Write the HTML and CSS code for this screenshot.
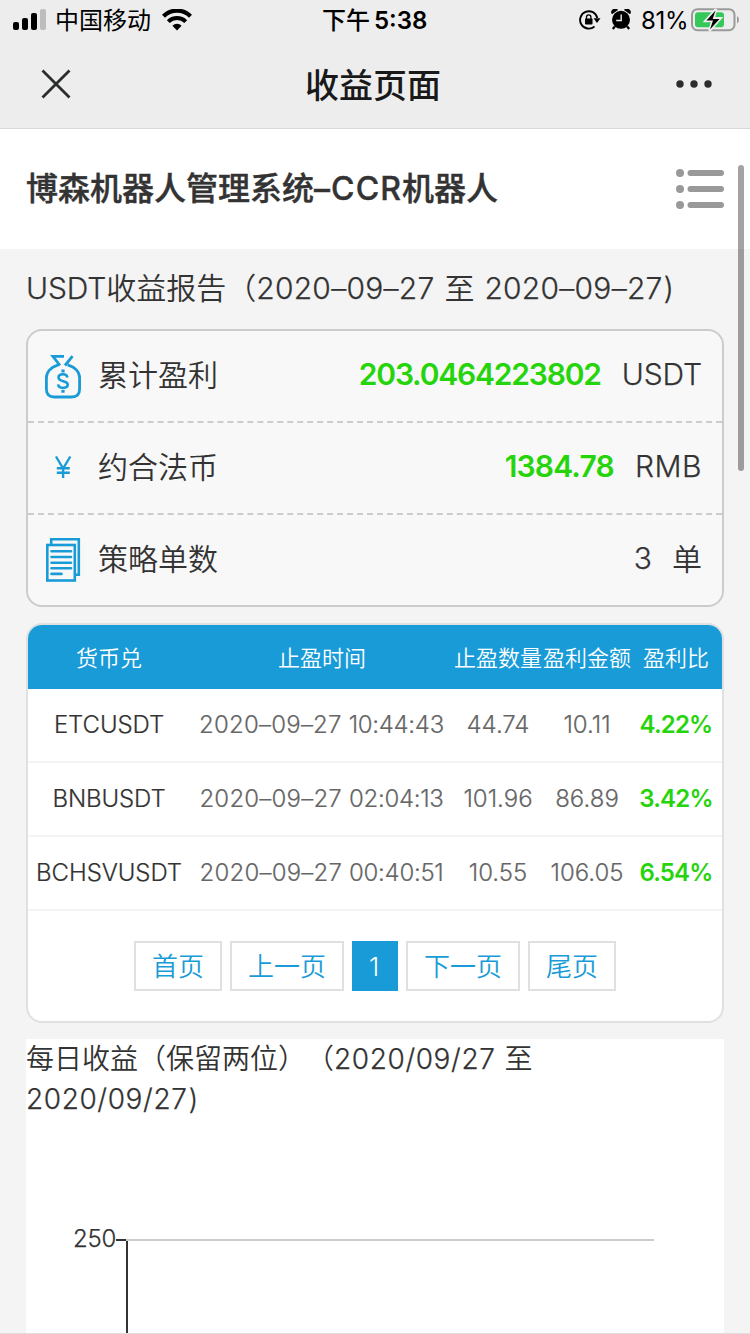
FILE: index.html
```html
<!DOCTYPE html>
<html lang="zh-CN">
<head>
<meta charset="utf-8">
<title>收益页面</title>
<link rel="stylesheet" href="styles.css">
</head>
<body>
<div class="screen">
  <header class="top">
    <div class="status">
      <div class="status-left">
        <svg class="signal" width="34" height="22" viewBox="0 0 34 22">
          <rect x="0" y="13" width="6" height="8" rx="2"/><rect x="9" y="9" width="6" height="12" rx="2"/><rect x="18" y="4" width="6" height="17" rx="2"/><rect x="27" y="0" width="6" height="21" rx="2" fill="#bdbdbd"/>
        </svg>
        <span class="carrier">中国移动</span>
        <svg class="wifi" width="30" height="22" viewBox="0 0 30 22">
          <path d="M1.500 7.200a19.200 19.200 0 0 1 27 0" fill="none" stroke="#000" stroke-width="4.200"/>
          <path d="M6.300 12.600a12.300 12.300 0 0 1 17.400 0" fill="none" stroke="#000" stroke-width="4"/>
          <path d="M15 21.400l-4.600-4.700a6.500 6.500 0 0 1 9.200 0z"/>
        </svg>
      </div>
      <div class="clock">下午<span class="clock-num">5:38</span></div>
      <div class="status-right">
        <svg width="22" height="20" viewBox="0 0 22 20">
          <path d="M15.500 16.500A8.700 8.700 0 1 1 18.300 8" fill="none" stroke="#000" stroke-width="1.900"/>
          <path d="M14.500 8.200h7l-3.500 4.800z"/>
          <rect x="6" y="8.500" width="7.500" height="6" rx=".8"/>
          <path d="M7.500 9V7a2.200 2.200 0 0 1 4.400 0v2" fill="none" stroke="#000" stroke-width="1.300"/>
        </svg>
        <svg class="alarm" width="20" height="21" viewBox="0 0 20 21">
          <circle cx="10" cy="10.800" r="9"/>
          <path d="M1 5.300A3.600 3.600 0 0 1 7 1z M19 5.300A3.600 3.600 0 0 0 13 1z"/>
          <path d="M3.800 17.500l-2 2.500M16.200 17.500l2 2.500" stroke="#000" stroke-width="2.200"/>
          <path d="M10.200 5.500v6H5.200" fill="none" stroke="#eee" stroke-width="1.400"/>
        </svg>
        <span class="percent">81%</span>
        <svg class="battery" width="49" height="24" viewBox="0 0 49 24">
          <rect x="1" y="1.200" width="42.500" height="21" rx="5.500" fill="none" stroke="#9a9a9a" stroke-width="2"/>
          <path d="M46 8v7.500q2-.8 2-3.700T46 8z" fill="#9a9a9a"/>
          <rect x="4" y="4.200" width="29" height="15" rx="3" fill="#34c759"/>
          <path d="M25 1L14.500 13h6.800L18.500 23 29.500 10.300h-7z" stroke="#eee" stroke-width="2.600"/>
          <path d="M24.500 2.500L15.500 12.500h6.500L19 21.500 28.500 11h-6.800z"/>
        </svg>
      </div>
    </div>
    <div class="nav">
      <svg class="close" width="30" height="30" viewBox="0 0 30 30"><path d="M1.500 1.500l27 27M28.500 1.500l-27 27" stroke="#2b2d2d" stroke-width="2.800"/></svg>
      <h1 class="nav-title">收益页面</h1>
      <svg class="more" width="36" height="8" viewBox="0 0 36 8"><circle cx="4" cy="4" r="3.700"/><circle cx="18" cy="4" r="3.700"/><circle cx="32" cy="4" r="3.700"/></svg>
    </div>
  </header>

  <div class="site">
    <h2 class="site-title">博森机器人管理系统<span class="site-code">–CCR</span>机器人</h2>
    <svg class="list" width="48" height="40" viewBox="0 0 48 40" fill="#999"><circle cx="4" cy="4" r="4"/><circle cx="4" cy="20" r="4"/><circle cx="4" cy="36" r="4"/><rect x="11.500" y="1" width="36.500" height="6" rx="3"/><rect x="11.500" y="17" width="36.500" height="6" rx="3"/><rect x="11.500" y="33" width="36.500" height="6" rx="3"/></svg>
  </div>

  <main class="content">
    <h3 class="report"><span class="report-coin">USDT</span>收益报告（<span class="report-date">2020–09–27</span><span class="report-to">至</span><span class="report-date">2020–09–27</span><span class="paren-end">)</span></h3>

    <section class="summary">
      <div class="line">
        <svg class="line-icon" width="38" height="46" viewBox="0 0 38 46" fill="none" stroke="#189bd7" stroke-width="2.800">
          <path d="M16 12.500L8.900 3.400H20M28.500 3.200L21 12.500M14.300 11.800C7 14 2.400 19 2.400 25v11q0 8 8 8h17.200q8 0 8-8V25c0-6-4.600-11-11.900-13.200"/>
          <path d="M23.500 24.500c-.4-2.200-2-3.200-4.500-3.200-2.700 0-4.500 1.200-4.500 3.300 0 4.900 9.200 2.400 9.200 7 0 2.200-1.900 3.300-4.700 3.300-2.700 0-4.600-1.200-4.900-3.500" stroke-width="2.600"/>
          <path d="M17.400 18h3.200M17.400 38.300h3.200"/>
        </svg>
        <span class="line-label">累计盈利</span><b class="amount total">203.0464223802</b><span class="unit usdt">USDT</span>
      </div>
      <div class="line">
        <svg class="line-icon" width="38" height="46" viewBox="0 0 38 46" fill="none" stroke="#189bd7" stroke-width="2.400"><path d="M12 11.500l7.100 12 7.200-12M19.100 23V33M12.800 23.300h13M12.800 27.700h13"/></svg>
        <span class="line-label">约合法币</span><b class="amount fiat">1384.78</b><span class="unit rmb">RMB</span>
      </div>
      <div class="line">
        <svg class="line-icon" width="38" height="46" viewBox="0 0 38 46" fill="none" stroke="#189bd7" stroke-width="2.600"><path d="M7.200 7.500V2.300h27.600v35.400h-4"/><rect x="3.300" y="8" width="27.500" height="35.500"/><path d="M7.500 14.300H27M7.500 20H27M7.500 25.700H27M7.500 31.200H27M7.500 36.900H17.500" stroke-linecap="round"/></svg>
        <span class="line-label">策略单数</span><span class="amount count">3</span><span class="unit cjk-unit">单</span>
      </div>
    </section>

    <section class="orders">
      <div class="row head"><span>货币兑</span><span>止盈时间</span><span>止盈数量</span><span>盈利金额</span><span>盈利比</span></div>
      <div class="row"><span class="pair">ETCUSDT</span><span class="time"><span class="day">2020–09–27</span><span class="hour">10:44:43</span></span><span>44.74</span><span>10.11</span><b class="ratio">4.22%</b></div>
      <div class="row"><span class="pair">BNBUSDT</span><span class="time"><span class="day">2020–09–27</span><span class="hour">02:04:13</span></span><span>101.96</span><span>86.89</span><b class="ratio">3.42%</b></div>
      <div class="row"><span class="pair">BCHSVUSDT</span><span class="time"><span class="day">2020–09–27</span><span class="hour">00:40:51</span></span><span>10.55</span><span>106.05</span><b class="ratio">6.54%</b></div>
      <nav class="pager"><a class="page">首页</a><a class="page">上一页</a><a class="page current">1</a><a class="page">下一页</a><a class="page">尾页</a></nav>
    </section>

    <section class="daily">
      <h3 class="daily-title">每日收益（保留两位）（<span class="daily-date">2020/09/27</span><span class="daily-to">至</span><br><span class="daily-date">2020/09/27</span><span class="paren-end">)</span></h3>
      <div class="chart">
        <span class="tick-label">250</span>
        <div class="plot"></div>
      </div>
    </section>
  </main>
  <div class="scrollbar"></div>
</div>
</body>
</html>
```
FILE: styles.css
```css
* { box-sizing: border-box; }
body { margin: 0; }
h1, h2, h3 { margin: 0; font-weight: 350; }
svg { display: block; flex: none; }
.screen {
  position: relative;
  width: 750px; height: 1334px;
  overflow: hidden;
  background: #f4f4f4;
  color: #333;
  font-family: Inter, "Noto Sans CJK SC", sans-serif;
  font-weight: 350;
  white-space: nowrap;
  text-spacing-trim: space-all;
}
.screen::after {
  content: ""; position: absolute; left: 0; bottom: 0;
  width: 100%; height: 1px; background: #dedede;
}
.top { height: 129px; background: #ededed; border-bottom: 1px solid #d9d9d9; color: #000; }
.status { display: grid; grid-template-columns: 1fr 106px 1fr; height: 40px; padding-top: 1px; align-items: center; font-size: 24px; line-height: 39px; }
.status-left { display: flex; align-items: center; padding-left: 13px; }
.carrier { margin-left: 8px; font-weight: 400; }
.signal, .wifi { margin-bottom: 1px; }
.wifi { margin-left: 11px; }
.clock { display: flex; font-weight: 500; }
.clock-num { margin-left: 4px; font-weight: 600; }
.status-right { display: flex; align-items: center; justify-content: flex-end; padding-right: 10px; }
.status-right svg { margin-bottom: 1px; }
.status-right .alarm { margin-left: 10px; margin-bottom: 2px; }
.percent { margin-left: 10px; width: 47px; font-weight: 400; letter-spacing: -.3px; }
.battery { margin-left: 3px; }
.nav { display: grid; grid-template-columns: 1fr auto 1fr; align-items: center; height: 88px; padding: 0 38px 0 41px; }
.nav-title { margin-right: 7px; padding-bottom: 2px; font-size: 34px; font-weight: 500; color: #191919; }
.more { justify-self: end; fill: #2b2d2d; }
.site { display: flex; justify-content: space-between; align-items: center; height: 120px; padding: 0 26px; background: #fff; }
.site-title { padding-bottom: 6px; font-size: 32px; font-weight: 500; -webkit-text-stroke: .4px #333; }
.site-code { letter-spacing: 1.1px; }
.content { padding: 0 26px; }
.report { display: flex; height: 80px; font-size: 30px; line-height: 78px; }
.report-coin, .report-date, .daily-date, .paren-end, .unit, .count, .tick-label { -webkit-text-stroke: .25px #333; }
.report-coin { letter-spacing: -.1px; }
.report-date { letter-spacing: .25px; }
.report-to { margin: 0 10px; }
.paren-end { margin-left: 1px; }
.summary { height: 278px; border: 2px solid #ccc; border-radius: 16px; background: #f8f8f8; }
.line { display: flex; align-items: center; height: 92px; padding: 0 20px 0 16px; border-bottom: 2px dashed #ccc; font-size: 30px; }
.line:last-child { height: 90px; border-bottom: 0; }
.line-label { margin-left: 16px; padding-bottom: 6px; }
.amount { margin-left: auto; padding-bottom: 4px; }
b.amount { color: #26d40c; font-weight: 600; }
.total { letter-spacing: -1.2px; }
.fiat { letter-spacing: -.8px; }
.unit { margin-left: 21px; padding-bottom: 4px; }
.usdt { letter-spacing: -.1px; }
.rmb { letter-spacing: .5px; }
.unit.cjk-unit { margin-left: 20px; padding-bottom: 6px; -webkit-text-stroke: 0; }
.orders { height: 400px; margin-top: 16px; border: 2px solid #e0e0e0; border-radius: 16px; background: #fff; overflow: hidden; }
.row { display: grid; grid-template-columns: 162px 264px 88px 90px 90px; align-items: center; height: 74px; padding-bottom: 1px; border-bottom: 2px solid #f4f4f4; text-align: center; font-size: 24px; color: #666; -webkit-text-stroke: .2px; }
.head { height: 64px; padding-bottom: 3px; border: 0; background: #189bd7; color: #fff; font-size: 22px; -webkit-text-stroke: 0; }
.row > * { display: flex; justify-content: center; }
.row > :last-child { padding-right: 2px; }
.row .time { gap: 7px; padding-right: 1px; }
.day { letter-spacing: .2px; }
.hour { letter-spacing: -.3px; }
.pair { color: #333; letter-spacing: -.1px; }
.ratio { color: #26d40c; font-weight: 600; letter-spacing: -.8px; -webkit-text-stroke: 0; }
.pager { display: flex; justify-content: center; gap: 8px; margin-top: 30px; }
.page { height: 50px; padding: 0 16px; border: 2px solid #e0e0e0; color: #189bd7; font-size: 26px; line-height: 47px; }
.page.current { width: 46px; padding: 0 15px; border-color: #189bd7; background: #189bd7; color: #fff; }
.daily { height: 300px; margin-top: 16px; background: #fff; }
.daily-title { font-size: 28px; line-height: 40px; }
.daily-date { letter-spacing: .6px; }
.daily-to { margin-left: 9px; }
.chart { display: flex; align-items: flex-start; margin-top: 106px; padding-left: 47px; }
.tick-label { width: 43px; font-size: 24px; line-height: 28px; letter-spacing: -.2px; }
.plot { width: 538px; height: 100px; margin-top: 14px; border-top: 2px solid #ccc; background: linear-gradient(#333, #333) 10px 0 / 2px 100% no-repeat; border-image: linear-gradient(90deg, #333 12px, #ccc 12px) 2; border-width: 2px 0 0; }
.scrollbar { position: absolute; left: 738px; top: 165px; width: 6px; height: 306px; border-radius: 3px; background: rgba(0, 0, 0, .36); }
```
